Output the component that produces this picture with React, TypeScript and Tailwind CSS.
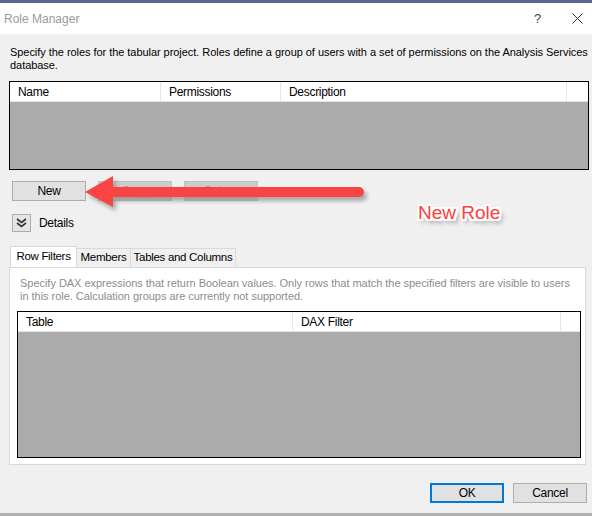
import React from 'react';

const font = { fontFamily: '"Liberation Sans", Arial, sans-serif' };

function WinButton({ label, disabled, focused, className }: { label: string; disabled?: boolean; focused?: boolean; className?: string }) {
  const base = 'h-[20px] flex items-center justify-center text-[12px] leading-none';
  const look = focused
    ? 'border-2 border-[#0078d7] bg-[#e1e1e1] text-black'
    : disabled
      ? 'border border-[#bfbfbf] bg-[#cccccc] text-[#a0a0a0]'
      : 'border border-[#adadad] bg-[#e1e1e1] text-black';
  return <div className={`${base} ${look} ${className ?? ''}`}>{label}</div>;
}

function GridHeader({ cols }: { cols: { label: string; w: string }[] }) {
  return (
    <div className="h-[20px] flex bg-white border-b border-[#e5e5e5] text-[12px] text-black">
      {cols.map((c) => (
        <div key={c.label} className={`${c.w} h-full flex items-center pl-[8px] border-r border-[#e5e5e5]`}>
          {c.label}
        </div>
      ))}
      <div className="flex-1" />
    </div>
  );
}

function Arrow() {
  return (
    <svg className="absolute left-[80px] top-[170px]" width="300" height="50" viewBox="0 0 300 50">
      <defs>
        <filter id="sh" x="-10%" y="-50%" width="120%" height="200%">
          <feGaussianBlur stdDeviation="2" />
        </filter>
      </defs>
      <g transform="translate(3,4)" fill="#7a7a7a" opacity="0.6" filter="url(#sh)">
        <polygon points="5,22 33,6 33,37" />
        <rect x="30" y="17" width="254" height="10" rx="5" />
      </g>
      <g fill="#fa4343">
        <polygon points="5,22 33,6 33,37" />
        <rect x="30" y="17" width="254" height="10" rx="5" />
      </g>
    </svg>
  );
}

export default function App() {
  return (
    <div
      className="w-[592px] h-[516px] bg-[#f0f0f0] relative flex flex-col overflow-hidden text-[11px] tracking-[-0.3px]"
      style={font}
    >
      <div className="h-[3px] bg-[#5a6890]" />
      <div className="h-[31px] bg-white flex items-center justify-between">
        <span className="pl-[4px] text-[12px] tracking-normal text-[#9a9a9a]">Role Manager</span>
        <div className="flex items-center gap-[31px] pr-[9px]">
          <span className="text-[13px] text-[#444]">?</span>
          <svg width="11" height="11" viewBox="0 0 11 11">
            <path d="M0.5 0.5 L10.5 10.5 M10.5 0.5 L0.5 10.5" stroke="#333" strokeWidth="1" />
          </svg>
        </div>
      </div>

      <div className="flex flex-col px-[9px]">
        <p className="mt-[12px] pl-[1px] mr-[-8px] leading-[13px] tracking-[-0.05px] whitespace-nowrap text-black">
          Specify the roles for the tabular project. Roles define a group of users with a set of permissions on the Analysis Services
          <br />
          database.
        </p>

        <div className="mt-[9px] h-[89px] w-[580px] border border-black flex flex-col">
          <GridHeader
            cols={[
              { label: 'Name', w: 'w-[151px]' },
              { label: 'Permissions', w: 'w-[120px]' },
              { label: 'Description', w: 'w-[286px]' },
            ]}
          />
          <div className="flex-1 bg-[#ababab]" />
        </div>

        <div className="mt-[11px] flex gap-[12px] pl-[3px]">
          <WinButton label="New" className="w-[74px]" />
          <WinButton label="Copy" disabled className="w-[74px]" />
          <WinButton label="Delete" disabled className="w-[74px]" />
        </div>

        <div className="mt-[13px] flex items-center gap-[8px] pl-[3px]">
          <div className="w-[19px] h-[18px] border border-[#adadad] bg-[#e5e5e5] flex items-center justify-center">
            <svg width="11" height="10" viewBox="0 0 11 10">
              <path d="M1 1 L5.5 4.5 L10 1 M1 5 L5.5 8.5 L10 5" stroke="#333" strokeWidth="1.6" fill="none" />
            </svg>
          </div>
          <span className="text-[12px] text-black">Details</span>
        </div>

        <div className="mt-[14px] flex items-end pl-[1px] text-[11.5px] whitespace-nowrap text-black">
          <div className="w-[67px] h-[21px] flex items-center justify-center bg-white border border-b-0 border-[#d9d9d9]">Row Filters</div>
          <div className="w-[54px] h-[19px] flex items-center justify-center border border-l-0 border-b-0 border-[#d9d9d9]">Members</div>
          <div className="w-[105px] h-[19px] flex items-center justify-center border border-l-0 border-b-0 border-[#d9d9d9]">Tables and Columns</div>
        </div>

        <div className="w-[577px] h-[198px] bg-white border border-[#d9d9d9] flex flex-col px-[7px] pt-[9px]">
          <p className="pl-[3px] leading-[13px] tracking-[-0.03px] whitespace-nowrap text-[#8c8c8c]">
            Specify DAX expressions that return Boolean values. Only rows that match the specified filters are visible to users
            <br />
            in this role. Calculation groups are currently not supported.
          </p>
          <div className="mt-[8px] h-[147px] w-[564px] border border-black flex flex-col">
            <GridHeader
              cols={[
                { label: 'Table', w: 'w-[275px]' },
                { label: 'DAX Filter', w: 'w-[268px]' },
              ]}
            />
            <div className="flex-1 bg-[#ababab]" />
          </div>
        </div>

        <div className="mt-[18px] flex justify-end gap-[9px] mr-[-4px]">
          <WinButton label="OK" focused className="w-[74px]" />
          <WinButton label="Cancel" className="w-[74px]" />
        </div>
      </div>

      <div className="mt-auto h-[3px] bg-[#b0b0b0]" />

      <Arrow />
      <span
        className="absolute left-[418px] top-[203px] text-[19px] tracking-normal leading-none text-[#ff3d3d]"
        style={{
          textShadow:
            '2px 0 0 #fff, -2px 0 0 #fff, 0 2px 0 #fff, 0 -2px 0 #fff, 1px 1px 0 #fff, -1px -1px 0 #fff, 1px -1px 0 #fff, -1px 1px 0 #fff, 2px 2px 0 #fff, -2px 2px 0 #fff, 2px -2px 0 #fff, -2px -2px 0 #fff, 3px 4px 4px rgba(0,0,0,0.5)',
        }}
      >
        New Role
      </span>
    </div>
  );
}
